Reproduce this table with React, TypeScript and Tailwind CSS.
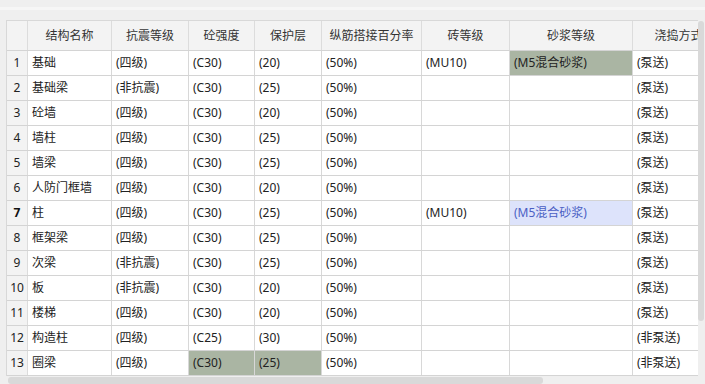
import { FC } from "react";

type Cell = { text: string; hl?: "green" | "blue" };
type Row = { no: number; cells: Cell[]; bold?: boolean };

const headers = ["结构名称", "抗震等级", "砼强度", "保护层", "纵筋搭接百分率", "砖等级", "砂浆等级", "浇捣方式"];
const widths = ["w-[84px]", "w-[77px]", "w-[66px]", "w-[67px]", "w-[100px]", "w-[88px]", "w-[123px]", "w-[92px]"];

const c = (text: string, hl?: "green" | "blue"): Cell => ({ text, hl });

// 각 행 데이터
const rows: Row[] = [
  { no: 1, cells: [c("基础"), c("(四级)"), c("(C30)"), c("(20)"), c("(50%)"), c("(MU10)"), c("(M5混合砂浆)", "green"), c("(泵送)")] },
  { no: 2, cells: [c("基础梁"), c("(非抗震)"), c("(C30)"), c("(25)"), c("(50%)"), c(""), c(""), c("(泵送)")] },
  { no: 3, cells: [c("砼墙"), c("(四级)"), c("(C30)"), c("(20)"), c("(50%)"), c(""), c(""), c("(泵送)")] },
  { no: 4, cells: [c("墙柱"), c("(四级)"), c("(C30)"), c("(25)"), c("(50%)"), c(""), c(""), c("(泵送)")] },
  { no: 5, cells: [c("墙梁"), c("(四级)"), c("(C30)"), c("(25)"), c("(50%)"), c(""), c(""), c("(泵送)")] },
  { no: 6, cells: [c("人防门框墙"), c("(四级)"), c("(C30)"), c("(20)"), c("(50%)"), c(""), c(""), c("(泵送)")] },
  { no: 7, bold: true, cells: [c("柱"), c("(四级)"), c("(C30)"), c("(25)"), c("(50%)"), c("(MU10)"), c("(M5混合砂浆)", "blue"), c("(泵送)")] },
  { no: 8, cells: [c("框架梁"), c("(四级)"), c("(C30)"), c("(25)"), c("(50%)"), c(""), c(""), c("(泵送)")] },
  { no: 9, cells: [c("次梁"), c("(非抗震)"), c("(C30)"), c("(25)"), c("(50%)"), c(""), c(""), c("(泵送)")] },
  { no: 10, cells: [c("板"), c("(非抗震)"), c("(C30)"), c("(20)"), c("(50%)"), c(""), c(""), c("(泵送)")] },
  { no: 11, cells: [c("楼梯"), c("(四级)"), c("(C30)"), c("(20)"), c("(50%)"), c(""), c(""), c("(泵送)")] },
  { no: 12, cells: [c("构造柱"), c("(四级)"), c("(C25)"), c("(30)"), c("(50%)"), c(""), c(""), c("(非泵送)")] },
  { no: 13, cells: [c("圈梁"), c("(四级)"), c("(C30)", "green"), c("(25)", "green"), c("(50%)"), c(""), c(""), c("(非泵送)")] },
];

const App: FC = () => {
  return (
    <div className="relative h-[384px] w-[705px] overflow-hidden bg-[#efefef] font-['Noto_Sans','Noto_Sans_CJK_SC',sans-serif] text-[12px] text-[#222]">
      {/* 상단 여백 */}
      <div className="h-[20px] pt-[7px]">
        <div className="h-[3px] bg-[#f6f6f6]" />
      </div>

      {/* 표 */}
      <div className="ml-[6px] h-[356px] w-[692px] overflow-hidden border-l border-t border-[#d8d8d8] bg-white">
        <div className="flex h-[30px] w-max border-b border-[#d4d4d4] bg-[#f3f3f3]">
          <div className="w-[21px] shrink-0 border-r border-[#dcdcdc]" />
          {headers.map((h, i) => (
            <div
              key={h}
              className={`${widths[i]} flex shrink-0 items-center justify-center border-r border-[#dcdcdc] text-[#333]`}
            >
              {h}
            </div>
          ))}
        </div>
        {rows.map((r) => (
          <div key={r.no} className="flex h-[25px] w-max border-b border-[#d4d4d4]">
            <div
              className={`flex w-[21px] shrink-0 items-center justify-center border-r border-[#dcdcdc] bg-[#f3f3f3] ${r.bold ? "font-bold text-[#111]" : ""}`}
            >
              {r.no}
            </div>
            {r.cells.map((cell, i) => (
              <div
                key={i}
                className={`${widths[i]} flex shrink-0 items-center whitespace-nowrap border-r border-[#d8d8d8] pl-[4px] ${
                  cell.hl === "green"
                    ? "bg-[#aab5a3]"
                    : cell.hl === "blue"
                      ? "bg-[#dde3fb] text-[#4b5fc4]"
                      : ""
                }`}
              >
                {cell.text}
              </div>
            ))}
          </div>
        ))}
      </div>

      {/* 가로 스크롤바 */}
      <div className="ml-[8px] mt-[1px] h-[7px] w-[535px] rounded-[3px] bg-[#d9d9d9]" />

      {/* 세로 스크롤바 */}
      <div className="absolute right-[1px] top-[21px] h-[300px] w-[6px] rounded-[3px] bg-[#d9d9d9]" />
    </div>
  );
};

export default App;
